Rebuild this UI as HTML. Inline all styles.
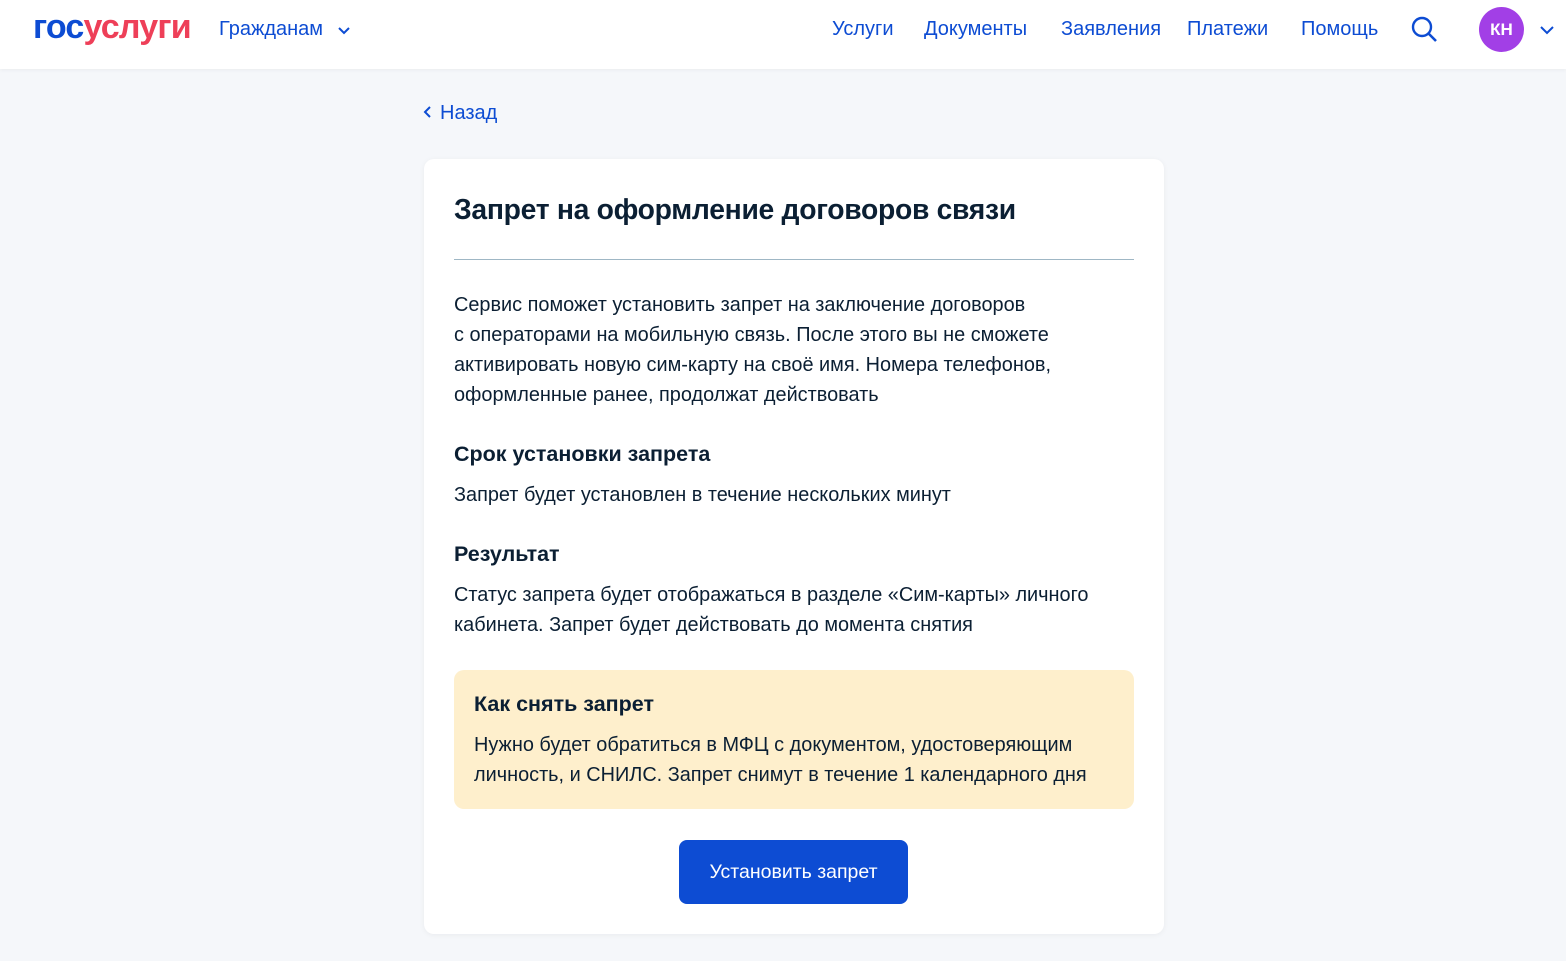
<!DOCTYPE html>
<html><head><meta charset="utf-8"><style>
*{margin:0;padding:0;box-sizing:border-box}
body{width:1566px;height:961px;background:#f5f7fa;font-family:"Liberation Sans",sans-serif;color:#0b1f33;overflow:hidden;position:relative}
.hdr{position:absolute;left:0;top:0;width:1566px;height:69px;background:#fff;box-shadow:0 1px 4px rgba(0,0,0,.05)}
.logo{position:absolute;left:33px;top:8px;font-size:34px;font-weight:bold;letter-spacing:-0.8px}
.nav{position:absolute;top:18px;font-size:20px;color:#0d4cd3}
.back{position:absolute;left:422px;top:102px;font-size:20px;color:#0d4cd3}
.card{position:absolute;left:424px;top:159px;width:740px;height:775px;background:#fff;border-radius:10px;box-shadow:0 1px 6px rgba(0,0,0,.05)}
h1{position:absolute;left:30px;top:34px;font-size:28.3px;font-weight:bold;letter-spacing:-0.3px}
.hr{position:absolute;left:30px;top:100px;width:680px;height:1px;background:#9fb7c5}
.t{position:absolute;left:30px;font-size:19.9px;line-height:30px;width:690px}
h3{position:absolute;left:30px;font-size:21.5px;font-weight:bold}
.warn{position:absolute;left:30px;top:511px;width:680px;height:139px;background:#feefcc;border-radius:10px}
.btn{position:absolute;left:255px;top:681px;width:229px;height:64px;background:#0d4cd3;border-radius:8px;color:#fff;font-size:19.5px;text-align:center;line-height:64px}
</style></head><body>
<div class="hdr">
<div class="logo"><span style="color:#0d4cd3">гос</span><span style="color:#ee3f58">услуги</span></div>
<div class="nav" style="left:219px">Гражданам <svg width="14" height="10" style="margin-left:8px" viewBox="0 0 14 10"><path d="M2 3l5 5 5-5" stroke="#0d4cd3" stroke-width="2" fill="none"/></svg></div>
<div class="nav" style="left:832px">Услуги</div>
<div class="nav" style="left:924px">Документы</div>
<div class="nav" style="left:1061px">Заявления</div>
<div class="nav" style="left:1187px">Платежи</div>
<div class="nav" style="left:1301px">Помощь</div>
<svg style="position:absolute;left:1410px;top:15px" width="30" height="30" viewBox="0 0 30 30"><circle cx="12" cy="12" r="9" stroke="#0d4cd3" stroke-width="2.4" fill="none"/><path d="M19 19l7 7" stroke="#0d4cd3" stroke-width="2.6"/></svg>
<div style="position:absolute;left:1479px;top:7px;width:45px;height:45px;border-radius:50%;background:#a23fe6;color:#fff;font-weight:bold;font-size:17px;text-align:center;line-height:45px">КН</div>
<svg style="position:absolute;left:1539px;top:24px" width="16" height="12" viewBox="0 0 16 12"><path d="M2 3l6 6 6-6" stroke="#0d4cd3" stroke-width="2" fill="none"/></svg>
</div>
<div class="back"><svg width="12" height="14" viewBox="0 0 12 14" style="margin-right:6px"><path d="M8 2L3 7l5 5" stroke="#0d4cd3" stroke-width="2" fill="none"/></svg>Назад</div>
<div class="card">
<h1>Запрет на оформление договоров связи</h1>
<div class="hr"></div>
<div class="t" style="top:131px">Сервис поможет установить запрет на заключение договоров<br>с операторами на мобильную связь. После этого вы не сможете<br>активировать новую сим-карту на своё имя. Номера телефонов,<br>оформленные ранее, продолжат действовать</div>
<h3 style="top:283px">Срок установки запрета</h3>
<div class="t" style="top:321px">Запрет будет установлен в течение нескольких минут</div>
<h3 style="top:383px">Результат</h3>
<div class="t" style="top:421px">Статус запрета будет отображаться в разделе «Сим-карты» личного<br>кабинета. Запрет будет действовать до момента снятия</div>
<div class="warn">
<h3 style="left:20px;top:22px">Как снять запрет</h3>
<div class="t" style="left:20px;top:60px;width:660px">Нужно будет обратиться в МФЦ с документом, удостоверяющим<br>личность, и СНИЛС. Запрет снимут в течение 1 календарного дня</div>
</div>
<div class="btn">Установить запрет</div>
</div>
</body></html>
